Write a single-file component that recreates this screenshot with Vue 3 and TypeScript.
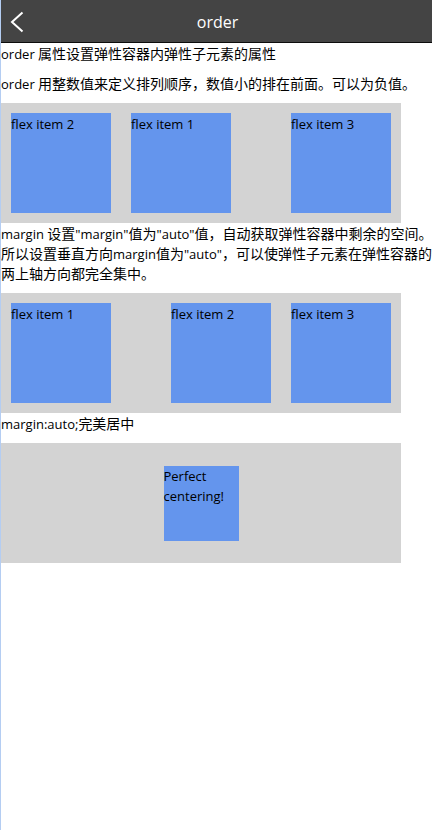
<script setup lang="ts">
interface FlexItem {
  id: number
  order: number
  push?: boolean
}

const orderedItems: FlexItem[] = [
  { id: 1, order: 0, push: true },
  { id: 2, order: -1 },
  { id: 3, order: 1 },
]

const marginItems: FlexItem[] = [
  { id: 1, order: 0, push: true },
  { id: 2, order: 0 },
  { id: 3, order: 0 },
]

function goBack(): void {
  window.history.back()
}
</script>

<template>
  <div class="page">
    <header class="bar">
      <button class="back" type="button" aria-label="返回" @click="goBack">
        <svg class="back-icon" viewBox="0 0 14 22" aria-hidden="true">
          <path d="M12.5 1.5 L2 11 L12.5 20.5" />
        </svg>
      </button>
      <h1 class="title">order</h1>
    </header>

    <main>
      <p class="note"><span class="latin">order </span>属性设置弹性容器内弹性子元素的属性</p>
      <p class="note"><span class="latin">order </span>用整数值来定义排列顺序，数值小的排在前面。可以为负值。</p>
      <div class="flex-container">
        <div
          v-for="item in orderedItems"
          :key="item.id"
          class="flex-item"
          :class="{ push: item.push }"
          :style="{ order: item.order }"
        >flex item {{ item.id }}</div>
      </div>

      <p class="note"><span class="latin">margin </span>设置<span class="latin">"margin"</span>值为<span class="latin">"auto"</span>值，自动获取弹性容器中剩余的空间。所以设置垂直方向<span class="latin">margin</span>值为<span class="latin">"auto"</span>，可以使弹性子元素在弹性容器的两上轴方向都完全集中。</p>
      <div class="flex-container">
        <div
          v-for="item in marginItems"
          :key="item.id"
          class="flex-item"
          :class="{ push: item.push }"
          :style="{ order: item.order }"
        >flex item {{ item.id }}</div>
      </div>

      <p class="note"><span class="latin">margin:auto;</span>完美居中</p>
      <div class="flex-container">
        <div class="flex-item centered">Perfect centering!</div>
      </div>
    </main>
  </div>
</template>

<style>
body {
  margin: 0;
  background: #fff;
}
</style>

<style scoped>
.page {
  box-sizing: border-box;
  min-height: 100vh;
  overflow-x: clip;
  border-left: 1px solid #b4cdf2;
  color: #000;
  font: 14px/20px "Open Sans", "Noto Sans CJK SC", sans-serif;
}

.bar {
  display: grid;
  grid-template-columns: 40px 1fr 40px;
  align-items: center;
  height: 42px;
  border-bottom: 1px solid #0c0c0c;
  background: #444;
}

.back {
  display: flex;
  align-items: center;
  height: 42px;
  padding: 2px 0 0 9px;
  border: 0;
  background: none;
  cursor: pointer;
}

.back-icon {
  width: 14px;
  height: 22px;
  fill: none;
  stroke: #fff;
  stroke-width: 2;
}

.title {
  margin: 0;
  padding: 2px 0 0 2px;
  color: #fff;
  font-size: 16px;
  font-weight: 400;
  text-align: center;
}

.note {
  margin: 0 -4px 9px 0;
  padding-top: 1px;
}

.latin {
  font-size: 13px;
}

.flex-container {
  display: flex;
  width: 400px;
  max-width: 100%;
  height: 120px;
  background: #d3d3d3;
}

.flex-item {
  box-sizing: border-box;
  width: 100px;
  height: 100px;
  margin: 10px;
  padding-top: 1px;
  background: #6495ed;
  font-size: 13px;
}

.push {
  margin-right: auto;
}

.centered {
  width: 75px;
  height: 75px;
  margin: auto;
  padding-top: 0;
}
</style>
